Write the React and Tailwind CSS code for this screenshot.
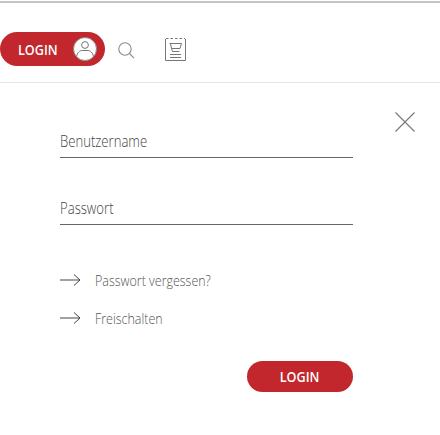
function UserIcon() {
  return (
    <svg width="24" height="24" viewBox="0 0 24 24" fill="none">
      <circle cx="12" cy="12" r="11.5" fill="#fff" stroke="#8a8a8a" strokeWidth="1" />
      <circle cx="12" cy="8" r="3.4" stroke="#777" strokeWidth="1" />
      <path d="M3.6 19.5c.6-4 3.2-6 5.4-6h6c2.2 0 4.8 2 5.4 6" stroke="#777" strokeWidth="1" />
    </svg>
  );
}

function SearchIcon() {
  return (
    <svg width="17" height="17" viewBox="0 0 17 17" fill="none" stroke="#8a8a8a" strokeWidth="1.1">
      <circle cx="7" cy="7" r="6.2" />
      <path d="M11.5 11.5 16 16.2" />
    </svg>
  );
}

function CartIcon() {
  return (
    <svg width="21" height="23" viewBox="0 0 21 23" fill="none" stroke="#777" strokeWidth="1">
      <path d="M.5 1v21.5h20V1" />
      <path d="M1 .5h19" strokeDasharray="2.5 2" />
      <path d="M4.5 5.5h12l-1.5 5h-8.5l-1-5" />
      <path d="M6.5 10.5l1 3h7" />
      <path d="M5 16.5h11M5 19.5h11" />
    </svg>
  );
}

function CloseIcon() {
  return (
    <svg width="20" height="20" viewBox="0 0 20 20" fill="none" stroke="#777" strokeWidth="1.1">
      <path d="M.5.5l19 19M19.5.5l-19 19" />
    </svg>
  );
}

function ArrowIcon() {
  return (
    <svg width="21" height="12" viewBox="0 0 21 12" fill="none" stroke="#4a4044" strokeWidth="1" className="mt-[3px]">
      <path d="M0 6h20M14 .5 20 6l-6 5.5" />
    </svg>
  );
}

function Field({ label }) {
  return (
    <div className="border-b border-[#666] h-[32px] w-[293px] pt-[3px]">
      <span className="block origin-left scale-x-[0.82] text-[16px] leading-[24px] font-light text-[#444] whitespace-nowrap">{label}</span>
    </div>
  );
}

function LinkRow({ label }) {
  return (
    <div className="flex items-start gap-[14px] h-[20px]">
      <ArrowIcon />
      <span className="block origin-left scale-x-[0.89] text-[14px] leading-[20px] font-light text-[#555] whitespace-nowrap">{label}</span>
    </div>
  );
}

export default function App() {
  return (
    <div className="w-[440px] h-[435px] bg-white overflow-hidden font-['Open_Sans',sans-serif]">
      <div className="h-[82px] border-t-2 border-b border-t-[#c4c4c4] border-b-[#e4e4e4] mt-[1px] pt-[29px] flex items-start">
        <div className="w-[105px] h-[34px] bg-[#c1272d] rounded-full flex items-center justify-between pl-[18px] pr-[8px]">
          <span className="text-white text-[15px] font-semibold origin-left scale-x-[0.84] w-[39px] whitespace-nowrap">LOGIN</span>
          <UserIcon />
        </div>
        <div className="ml-[13px] mt-[10px]"><SearchIcon /></div>
        <div className="ml-[30px] mt-[6px]"><CartIcon /></div>
      </div>

      <div className="relative px-[60px]">
        <div className="absolute left-[395px] top-[29px]"><CloseIcon /></div>
        <div className="pt-[43px] flex flex-col gap-[35px]">
          <Field label="Benutzername" />
          <Field label="Passwort" />
        </div>
        <div className="mt-[46px] flex flex-col gap-[18px]">
          <LinkRow label="Passwort vergessen?" />
          <LinkRow label="Freischalten" />
        </div>
        <div className="w-[293px] flex justify-end mt-[32px]">
          <button className="w-[106px] h-[31px] rounded-full bg-[#c1272d] text-white text-[15px] font-semibold flex items-center justify-center">
            <span className="scale-x-[0.84]">LOGIN</span>
          </button>
        </div>
      </div>
    </div>
  );
}
